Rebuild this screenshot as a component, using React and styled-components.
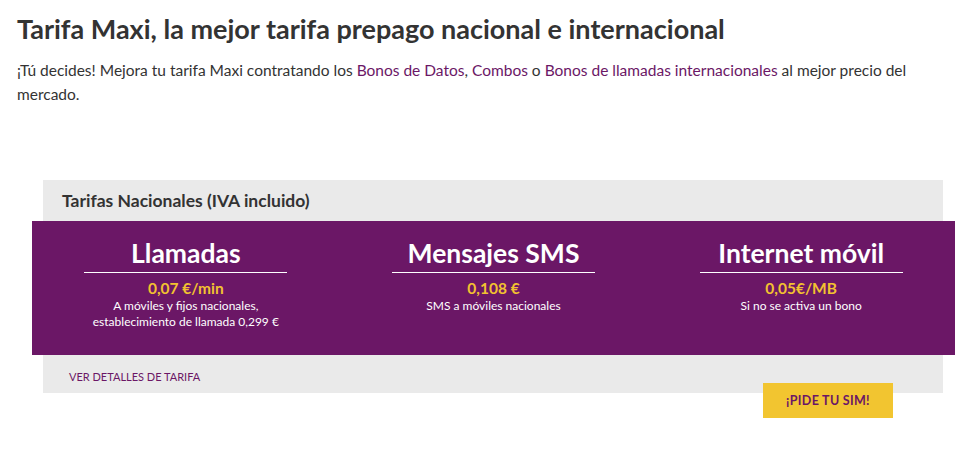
import React from "react";
import styled, { createGlobalStyle } from "styled-components";

const GlobalStyle = createGlobalStyle`
  body {
    margin: 0;
    background: #ffffff;
    font-family: Lato, "Noto Sans", sans-serif;
    color: #333333;
  }
`;

const tariffs = [
  {
    title: "Llamadas",
    price: "0,07 €/min",
    lines: ["A móviles y fijos nacionales,", "establecimiento de llamada 0,299 €"],
  },
  {
    title: "Mensajes SMS",
    price: "0,108 €",
    lines: ["SMS a móviles nacionales"],
  },
  {
    title: "Internet móvil",
    price: "0,05€/MB",
    lines: ["Si no se activa un bono"],
  },
];

const App = () => {
  return (
    <Page>
      <GlobalStyle />
      <Title>Tarifa Maxi, la mejor tarifa prepago nacional e internacional</Title>
      <Intro>
        ¡Tú decides! Mejora tu tarifa Maxi contratando los <Link>Bonos de Datos</Link>,{" "}
        <Link>Combos</Link> o <Link>Bonos de llamadas internacionales</Link> al mejor precio del
        mercado.
      </Intro>
      <TariffBox>
        <BoxHeader>Tarifas Nacionales (IVA incluido)</BoxHeader>
        <Band>
          {tariffs.map((t) => (
            <Column key={t.title}>
              <ColumnTitle>{t.title}</ColumnTitle>
              <Price>{t.price}</Price>
              {t.lines.map((l) => (
                <Detail key={l}>{l}</Detail>
              ))}
            </Column>
          ))}
        </Band>
        <BoxFooter>
          <DetailsLink>Ver detalles de tarifa</DetailsLink>
          <SimButton>¡Pide tu SIM!</SimButton>
        </BoxFooter>
      </TariffBox>
    </Page>
  );
};

const Page = styled.div`
  padding: 12px 0 40px 17px;
  width: 948px;
  box-sizing: border-box;
`;

const Title = styled.h1`
  margin: 0;
  font-size: 27px;
  line-height: 34px;
  font-weight: 700;
  color: #333333;
`;

const Intro = styled.p`
  margin: 12px 0 0;
  width: 910px;
  font-size: 15.5px;
  line-height: 24px;
  color: #333333;
`;

const Link = styled.a`
  color: #6b1766;
  text-decoration: none;
`;

const TariffBox = styled.div`
  margin: 74px 0 0 26px;
  width: 900px;
  background: #eaeaea;
`;

const BoxHeader = styled.div`
  height: 41px;
  padding-left: 19px;
  display: flex;
  align-items: center;
  font-size: 17.5px;
  font-weight: 700;
  color: #333333;
`;

const Band = styled.div`
  margin: 0 -12px 0 -11px;
  height: 134px;
  background: #6b1766;
  display: grid;
  grid-template-columns: repeat(3, 1fr);
`;

const Column = styled.div`
  display: flex;
  flex-direction: column;
  align-items: center;
  padding-top: 16px;
`;

const ColumnTitle = styled.div`
  width: 203px;
  text-align: center;
  font-size: 26.5px;
  line-height: 33px;
  font-weight: 700;
  color: #ffffff;
  padding-bottom: 2px;
  border-bottom: 1px solid #ffffff;
`;

const Price = styled.div`
  margin-top: 6px;
  font-size: 15.5px;
  line-height: 19px;
  font-weight: 700;
  color: #f2c230;
`;

const Detail = styled.div`
  font-size: 12px;
  line-height: 16px;
  color: #ffffff;
`;

const BoxFooter = styled.div`
  height: 38px;
  display: flex;
  justify-content: space-between;
  align-items: flex-start;
  padding: 0 50px 0 26px;
`;

const DetailsLink = styled.a`
  margin-top: 15px;
  font-size: 11px;
  line-height: 14px;
  text-transform: uppercase;
  color: #6b1766;
`;

const SimButton = styled.button`
  margin-top: 28px;
  width: 130px;
  height: 35px;
  border: none;
  background: #f2c530;
  color: #6b1766;
  font-family: Lato, "Noto Sans", sans-serif;
  font-size: 12.5px;
  font-weight: 700;
  letter-spacing: 0.3px;
  text-transform: uppercase;
  cursor: pointer;
`;

export default App;
